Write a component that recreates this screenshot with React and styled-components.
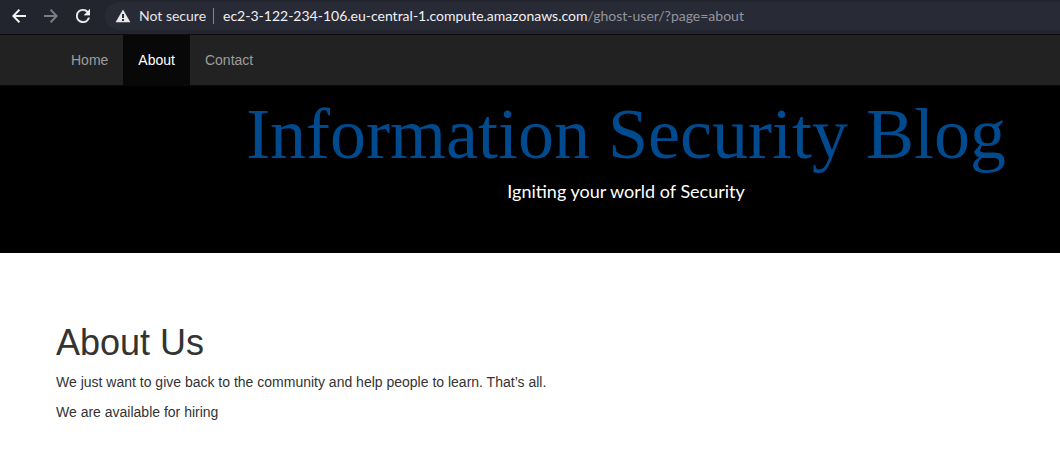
import React from "react";
import styled, { createGlobalStyle } from "styled-components";

const Global = createGlobalStyle`
  *, *::before, *::after { box-sizing: border-box; }
  body { margin: 0; background: #fff; color: #333; font: 14px/20px "Liberation Sans", Arial, sans-serif; }
`;
const Toolbar = styled.header`
  display: flex;
  align-items: center;
  height: 35px;
  padding: 0 0 2px 3px;
  background: #22252e;
  border-bottom: 1px solid #0c0c10;
`;
const IconButton = styled.button`
  display: flex;
  align-items: center;
  justify-content: center;
  width: 32px;
  height: 28px;
  padding: 0;
  border: 0;
  background: none;
  color: ${(p) => (p.$dim ? "#7d7d83" : "#f1f1f1")};
`;
const AddressBar = styled.div`
  display: flex;
  flex: 1;
  align-items: center;
  height: 28px;
  margin-left: 6px;
  padding-left: 10px;
  border-radius: 14px 0 0 14px;
  background: #282a36;
  color: #e6e6e6;
  font: 14px/16px Lato, "Noto Sans", sans-serif;
`;
const Security = styled.span`
  display: flex;
  align-items: center;
  gap: 8px;
  padding-right: 7px;
  border-right: 1px solid #85868e;
`;
const Address = styled.a`
  padding-left: 9px;
  color: #f1f1f3;
  text-decoration: none;
  white-space: nowrap;
`;
const Path = styled.span`
  color: #94969c;
`;
const Navbar = styled.nav`
  display: flex;
  height: 51px;
  padding-left: 56px;
  background: #222;
  border-bottom: 1px solid #080808;
`;
const NavLink = styled.a`
  padding: 15px;
  background: ${(p) => (p.$active ? "#080808" : "none")};
  color: ${(p) => (p.$active ? "#fff" : "#9d9d9d")};
  text-decoration: none;
`;
const Banner = styled.section`
  display: flex;
  justify-content: flex-end;
  padding: 8px 54px 52px 56px;
  background: #000;
  color: #fff;
`;
const BannerText = styled.div`
  text-align: center;
`;
const BlogTitle = styled.h1`
  margin: 0;
  color: #004b8f;
  font: 72px/80px "Liberation Serif", "Times New Roman", serif;
`;
const Tagline = styled.p`
  margin: 7px 0 0;
  font: 18px/20px Lato, sans-serif;
`;
const Content = styled.main`
  padding: 70px 56px 34px;
`;
const Heading = styled.h2`
  margin: 0 0 9px;
  font-size: 36px;
  font-weight: 500;
  line-height: 40px;
`;
const Paragraph = styled.p`
  margin: 0 0 10px;
`;

export default function App() {
  return (
    <>
      <Global />
      <Toolbar>
        <IconButton type="button" aria-label="Back">
          <svg width="14" height="14" viewBox="0 0 14 14" fill="none" stroke="currentColor" strokeWidth="2" aria-hidden="true">
            <path d="M14 7H2M7.4 .8 1.3 7l6.1 6.2" />
          </svg>
        </IconButton>
        <IconButton type="button" aria-label="Forward" $dim>
          <svg width="14" height="14" viewBox="0 0 14 14" fill="none" stroke="currentColor" strokeWidth="2" aria-hidden="true">
            <path d="M0 7h12M6.6 .8 12.7 7l-6.1 6.2" />
          </svg>
        </IconButton>
        <IconButton type="button" aria-label="Reload">
          <svg width="14" height="14" viewBox="4 4 16 16" fill="currentColor" stroke="currentColor" strokeWidth=".3" aria-hidden="true">
            <path d="M17.65 6.35A7.96 7.96 0 0 0 12 4a8 8 0 1 0 7.73 10h-2.08A6 6 0 1 1 12 6c1.66 0 3.14.69 4.22 1.78L13 11h7V4z" />
          </svg>
        </IconButton>
        <AddressBar>
          <Security>
            <svg width="16" height="14" viewBox="0 0 16 14" fill="currentColor" aria-hidden="true">
              <path fillRule="evenodd" d="M8 .6 15.4 13.2H.6zM7 5v4h2V5zm0 5v2h2v-2z" />
            </svg>
            Not secure
          </Security>
          <Address href="?page=about">ec2-3-122-234-106.eu-central-1.compute.amazonaws.com<Path>/ghost-user/?page=about</Path></Address>
        </AddressBar>
      </Toolbar>
      <Navbar>
        <NavLink href="?page=home">Home</NavLink>
        <NavLink href="?page=about" $active>About</NavLink>
        <NavLink href="?page=contact">Contact</NavLink>
      </Navbar>
      <Banner>
        <BannerText>
          <BlogTitle>Information Security Blog</BlogTitle>
          <Tagline>Igniting your world of Security</Tagline>
        </BannerText>
      </Banner>
      <Content>
        <Heading>About Us</Heading>
        <Paragraph>We just want to give back to the community and help people to learn. That’s all.</Paragraph>
        <Paragraph>We are available for hiring</Paragraph>
      </Content>
    </>
  );
}
